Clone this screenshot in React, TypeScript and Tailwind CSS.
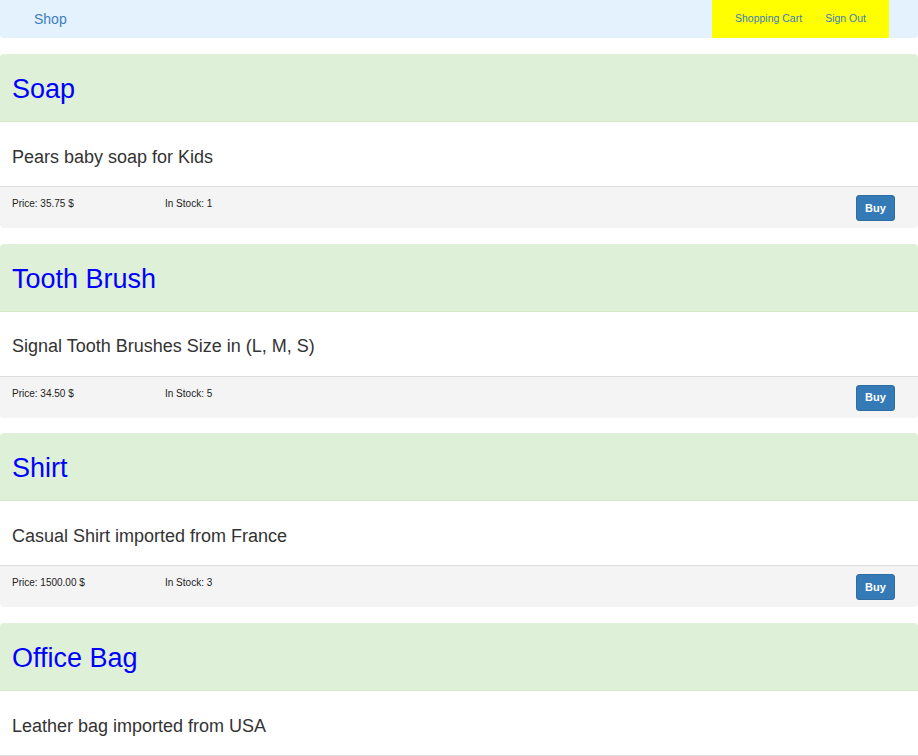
const products = [
  { name: "Soap", description: "Pears baby soap for Kids", price: "35.75", stock: 1 },
  { name: "Tooth Brush", description: "Signal Tooth Brushes Size in (L, M, S)", price: "34.50", stock: 5 },
  { name: "Shirt", description: "Casual Shirt imported from France", price: "1500.00", stock: 3 },
  { name: "Office Bag", description: "Leather bag imported from USA", price: "50.00", stock: 2 },
];

const Navbar = () => {
  return (
    <nav className="flex justify-between items-stretch h-[38px] bg-[#e3f2fd] rounded-b-[4px]">
      <a href="#" className="flex items-center pl-[34px] text-[14px] text-[#3d7ebf]">
        Shop
      </a>
      <ul className="flex items-center gap-[23px] bg-[#ffff00] px-[23px] mr-[29px] text-[10.5px] text-[#3d7ebf]">
        <li>
          <a href="#">Shopping Cart</a>
        </li>
        <li>
          <a href="#">Sign Out</a>
        </li>
      </ul>
    </nav>
  );
};

type Product = (typeof products)[number];

const ProductCard = ({ product }: { product: Product }) => {
  return (
    <section className="mb-[15.7px] bg-white rounded-[4px] overflow-hidden">
      <div className="h-[68px] flex items-center px-[12px] pt-[4px] bg-[#dff0d8] border-b border-[#d6e9c6]">
        <h2 className="text-[27px] text-[#0000ff] leading-none">{product.name}</h2>
      </div>
      <div className="h-[64px] flex items-center px-[12px] pt-[6px] text-[18px] text-[#333333]">
        {product.description}
      </div>
      <div className="h-[42px] flex items-start bg-[#f4f4f4] border-t border-[#dddddd] pl-[12px] pr-[23px] text-[10px] text-[#222222]">
        <span className="w-[153px] pt-[9px]">Price: {product.price} $</span>
        <span className="pt-[9px]">In Stock: {product.stock}</span>
        <button className="ml-auto mt-[8px] w-[39px] h-[26px] rounded-[3px] bg-[#337ab7] border border-[#2e6da4] text-white text-[11px] font-bold">
          Buy
        </button>
      </div>
    </section>
  );
};

export default function App() {
  return (
    <div className="min-h-screen bg-white font-['Liberation_Sans',Arial,sans-serif]">
      <Navbar />
      <main className="pt-[16px]">
        {products.map((p) => (
          <ProductCard key={p.name} product={p} />
        ))}
      </main>
    </div>
  );
}
